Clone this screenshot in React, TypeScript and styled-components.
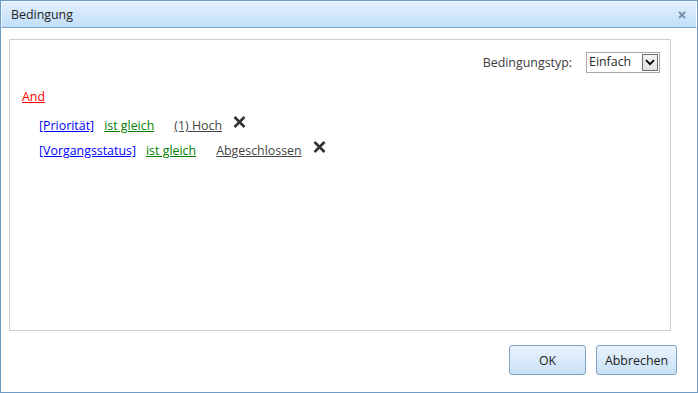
import styled, { createGlobalStyle } from "styled-components";

const GlobalStyle = createGlobalStyle`
  html, body {
    margin: 0;
    padding: 0;
    background: #ffffff;
  }

  body {
    font-family: "Open Sans", "Noto Sans", sans-serif;
    font-size: 12px;
  }
`;

interface Condition {
  field: string;
  operator: string;
  value: string;
}

const conditions: Condition[] = [
  { field: "[Priorität]", operator: "ist gleich", value: "(1) Hoch" },
  { field: "[Vorgangsstatus]", operator: "ist gleich", value: "Abgeschlossen" },
];

const CloseGlyph = () => (
  <svg width="8" height="8" viewBox="0 0 8 8">
    <path d="M1 1 L7 7 M7 1 L1 7" stroke="#7891a8" strokeWidth="2" />
  </svg>
);

const RemoveIcon = () => (
  <svg width="13" height="12" viewBox="0 0 13 12">
    <path
      d="M1.5 1 L11.5 11 M11.5 1 L1.5 11"
      stroke="#333333"
      strokeWidth="2.6"
      strokeLinecap="butt"
    />
  </svg>
);

const Chevron = () => (
  <svg width="10" height="7" viewBox="0 0 10 7">
    <path d="M1 1.2 L5 5.2 L9 1.2" stroke="#000" strokeWidth="1.8" fill="none" />
  </svg>
);

const App = () => {
  return (
    <>
      <GlobalStyle />
      <Window>
        <TitleBar>
          <Title>Bedingung</Title>
          <CloseButton>
            <CloseGlyph />
          </CloseButton>
        </TitleBar>
        <Body>
          <Editor>
            <TypeRow>
              <Label>Bedingungstyp:</Label>
              <FakeSelect>
                <SelectValue>Einfach</SelectValue>
                <SelectArrow>
                  <Chevron />
                </SelectArrow>
              </FakeSelect>
            </TypeRow>
            <Operator>And</Operator>
            <ConditionList>
              {conditions.map((c) => (
                <ConditionRow key={c.field}>
                  <FieldLink>{c.field}</FieldLink>
                  <OperatorLink>{c.operator}</OperatorLink>
                  <ValueLink>{c.value}</ValueLink>
                  <RemoveButton>
                    <RemoveIcon />
                  </RemoveButton>
                </ConditionRow>
              ))}
            </ConditionList>
          </Editor>
          <ButtonBar>
            <DialogButton $width={77}>OK</DialogButton>
            <DialogButton $width={81}>Abbrechen</DialogButton>
          </ButtonBar>
        </Body>
      </Window>
    </>
  );
};

export default App;

const Window = styled.div`
  width: 698px;
  height: 393px;
  box-sizing: border-box;
  border: 1px solid #6f9cc5;
  display: flex;
  flex-direction: column;
  background: #ffffff;
`;

const TitleBar = styled.div`
  height: 27px;
  box-sizing: border-box;
  display: flex;
  align-items: center;
  justify-content: space-between;
  padding: 0 10px 1px 9px;
  background: linear-gradient(#e3f0fd, #c1defa);
  border: 1px solid #f1f8ff;
  border-bottom: 1px solid #7aa5cc;
  border-right-color: #ffffff;
`;

const Title = styled.span`
  color: #1e1e1e;
  font-size: 12.4px;
`;

const CloseButton = styled.span`
  display: flex;
  align-items: center;
  margin-top: 1px;
`;

const Body = styled.div`
  flex: 1;
  display: flex;
  flex-direction: column;
  padding: 11px 26px 0 8px;
`;

const Editor = styled.div`
  height: 292px;
  box-sizing: border-box;
  border: 1px solid #cdcdcd;
  padding: 12px 10px 0 12px;
  display: flex;
  flex-direction: column;
  font-size: 12.4px;
`;

const TypeRow = styled.div`
  display: flex;
  justify-content: flex-end;
  align-items: center;
  gap: 14px;
`;

const Label = styled.span`
  color: #3c3c3c;
`;

const FakeSelect = styled.div`
  width: 74px;
  height: 21px;
  box-sizing: border-box;
  border: 1px solid #a9a9a9;
  display: flex;
  align-items: center;
  justify-content: space-between;
  padding: 0 1px 0 2px;
  color: #2a2a2a;
  font-size: 12.4px;
`;

const SelectValue = styled.span`
  line-height: 1;
`;

const SelectArrow = styled.span`
  width: 16px;
  height: 17px;
  box-sizing: border-box;
  border: 1px solid #6f6f6f;
  background: linear-gradient(#f4f4f4, #e2e2e2);
  display: flex;
  align-items: center;
  justify-content: center;
`;

const Operator = styled.a`
  align-self: flex-start;
  margin-top: 15px;
  color: #ff0000;
  text-decoration: underline;
  line-height: 17px;
`;

const ConditionList = styled.div`
  display: flex;
  flex-direction: column;
  padding: 8px 0 0 17px;
`;

const ConditionRow = styled.div`
  height: 25px;
  display: flex;
  align-items: center;
`;

const FieldLink = styled.a`
  color: #0000ff;
  text-decoration: underline;
  margin-right: 10px;
`;

const OperatorLink = styled.a`
  color: #008000;
  text-decoration: underline;
  margin-right: 20px;
`;

const ValueLink = styled.a`
  color: #444444;
  text-decoration: underline;
  margin-right: 11px;
`;

const RemoveButton = styled.span`
  display: flex;
  margin-bottom: 7px;
`;

const ButtonBar = styled.div`
  display: flex;
  justify-content: flex-end;
  gap: 10px;
  margin-top: 14px;
  margin-right: -6px;
`;

const DialogButton = styled.button<{ $width: number }>`
  width: ${({ $width }) => $width}px;
  height: 30px;
  box-sizing: border-box;
  border: 1px solid #7fa3c6;
  border-radius: 3px;
  background: linear-gradient(#eaf3fc, #c9e1f7);
  font-family: "Open Sans", "Noto Sans", sans-serif;
  font-size: 12.4px;
  color: #1e1e1e;
  padding: 0;
`;
